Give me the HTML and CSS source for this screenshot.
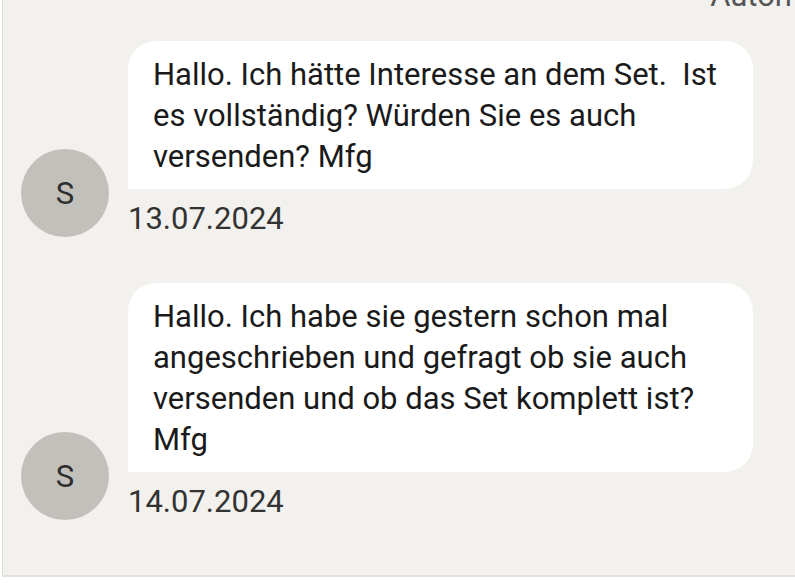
FILE: index.html
```html
<!DOCTYPE html>
<html lang="de">
<head>
<meta charset="utf-8">
<title>Nachrichten</title>
<link rel="stylesheet" href="styles.css">
</head>
<body>
<div class="thread">
  <div class="thread-head">Auton</div>
  <div class="messages">
    <div class="message">
      <div class="avatar">S</div>
      <div class="content">
        <div class="bubble">Hallo. Ich hätte Interesse an dem Set.&nbsp; Ist es vollständig? Würden Sie es auch versenden? Mfg</div>
        <div class="date">13.07.2024</div>
      </div>
    </div>
    <div class="message">
      <div class="avatar">S</div>
      <div class="content">
        <div class="bubble">Hallo. Ich habe sie gestern schon mal angeschrieben und gefragt ob sie auch versenden und ob das Set komplett ist? Mfg</div>
        <div class="date">14.07.2024</div>
      </div>
    </div>
  </div>
</div>
</body>
</html>
```
FILE: styles.css
```css
html, body {
  margin: 0;
  padding: 0;
  background: #ffffff;
}
body {
  font-family: Roboto, "Liberation Sans", sans-serif;
  overflow: hidden;
}
.thread {
  margin-left: 2px;
  border-left: 1px solid #dcdcda;
  border-bottom: 2px solid #e2e1de;
  background: #f2f1ee;
  height: 577px;
  box-sizing: border-box;
  overflow: hidden;
}
.thread-head {
  margin-top: -20px;
  margin-bottom: 30px;
  padding-right: 3px;
  text-align: right;
  font-size: 31px;
  line-height: 31px;
  color: #555;
}
.messages {
  display: flex;
  flex-direction: column;
  gap: 46px;
}
.message {
  display: flex;
  align-items: flex-end;
  padding-left: 18px;
  gap: 19px;
}
.avatar {
  flex: 0 0 88px;
  width: 88px;
  height: 88px;
  border-radius: 50%;
  background: #c2c0bb;
  color: #2e2e2e;
  font-size: 31px;
  display: flex;
  align-items: center;
  justify-content: center;
}
.content {
  width: 625px;
  display: flex;
  flex-direction: column;
}
.bubble {
  background: #ffffff;
  border-radius: 28px 28px 28px 0;
  padding: 13px 25px 12px;
  font-size: 31px;
  line-height: 41px;
  color: #1a1a1a;
}
.date {
  margin-top: 12px;
  font-size: 31px;
  line-height: 36px;
  color: #333;
}
```
